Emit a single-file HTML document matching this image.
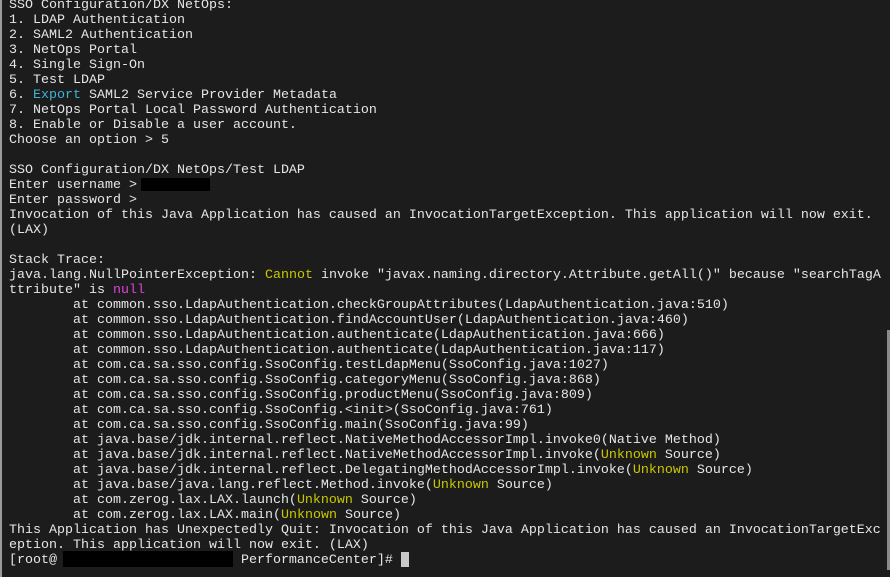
<!DOCTYPE html>
<html><head><style>
html,body{margin:0;padding:0}
body{width:890px;height:577px;background:#1c1c1c;overflow:hidden;position:relative}
.b{position:absolute;left:0;top:0;width:2px;height:577px;background:#9a9a9a}
pre{position:absolute;left:9px;top:-2px;margin:0;font-family:"Liberation Mono",monospace;font-size:13.33px;line-height:15px;color:#e6e6e6;white-space:pre}
.y{color:#c8c800}.m{color:#e040e0}.c{color:#3cb4d4}
.k{position:absolute;background:#000}
.cur{position:absolute;left:401px;top:552px;width:8px;height:15px;background:#c8c8c8}
.sb{position:absolute;left:887px;top:330px;width:3px;height:240px;background:#8a8a8a}
</style></head><body>
<div class="b"></div>
<pre>SSO Configuration/DX NetOps:
1. LDAP Authentication
2. SAML2 Authentication
3. NetOps Portal
4. Single Sign-On
5. Test LDAP
6. <span class="c">Export</span> SAML2 Service Provider Metadata
7. NetOps Portal Local Password Authentication
8. Enable or Disable a user account.
Choose an option &gt; 5

SSO Configuration/DX NetOps/Test LDAP
Enter username &gt;
Enter password &gt;
Invocation of this Java Application has caused an InvocationTargetException. This application will now exit.
(LAX)

Stack Trace:
java.lang.NullPointerException: <span class="y">Cannot</span> invoke "javax.naming.directory.Attribute.getAll()" because "searchTagA
ttribute" is <span class="m">null</span>
        at common.sso.LdapAuthentication.checkGroupAttributes(LdapAuthentication.java:510)
        at common.sso.LdapAuthentication.findAccountUser(LdapAuthentication.java:460)
        at common.sso.LdapAuthentication.authenticate(LdapAuthentication.java:666)
        at common.sso.LdapAuthentication.authenticate(LdapAuthentication.java:117)
        at com.ca.sa.sso.config.SsoConfig.testLdapMenu(SsoConfig.java:1027)
        at com.ca.sa.sso.config.SsoConfig.categoryMenu(SsoConfig.java:868)
        at com.ca.sa.sso.config.SsoConfig.productMenu(SsoConfig.java:809)
        at com.ca.sa.sso.config.SsoConfig.&lt;init&gt;(SsoConfig.java:761)
        at com.ca.sa.sso.config.SsoConfig.main(SsoConfig.java:99)
        at java.base/jdk.internal.reflect.NativeMethodAccessorImpl.invoke0(Native Method)
        at java.base/jdk.internal.reflect.NativeMethodAccessorImpl.invoke(<span class="y">Unknown</span> Source)
        at java.base/jdk.internal.reflect.DelegatingMethodAccessorImpl.invoke(<span class="y">Unknown</span> Source)
        at java.base/java.lang.reflect.Method.invoke(<span class="y">Unknown</span> Source)
        at com.zerog.lax.LAX.launch(<span class="y">Unknown</span> Source)
        at com.zerog.lax.LAX.main(<span class="y">Unknown</span> Source)
This Application has Unexpectedly Quit: Invocation of this Java Application has caused an InvocationTargetExc
eption. This application will now exit. (LAX)
[root@                       PerformanceCenter]# </pre>
<div class="k" style="left:141px;top:178px;width:69px;height:13px"></div>
<div class="k" style="left:63px;top:551px;width:170px;height:16px"></div>
<div class="cur"></div>
<div class="sb"></div>
</body></html>
